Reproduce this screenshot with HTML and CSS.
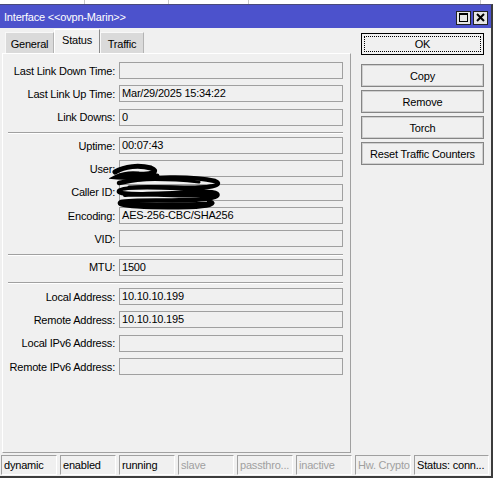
FILE: index.html
```html
<!DOCTYPE html>
<html lang="en">
<head>
    <meta charset="UTF-8">
    <meta name="viewport" content="width=device-width, initial-scale=1.0">
    <title>Interface &lt;&lt;ovpn-Marin&gt;&gt;</title>
    <link rel="stylesheet" href="styles.css">
</head>
<body>
    <div class="desk">
        <div class="backdrop"></div>
        <div class="window">
            <div class="titlebar">
                <span class="title">Interface &lt;&lt;ovpn-Marin&gt;&gt;</span>
                <div class="wbtns">
                    <span class="wbtn">
                        <svg width="13" height="12" viewBox="0 0 13 12">
                            <rect x="2.5" y="1.5" width="8" height="8" fill="none" stroke="#000" stroke-width="1"/>
                            <rect x="2" y="1" width="9" height="2" fill="#000"/>
                        </svg>
                    </span>
                    <span class="wbtn">
                        <svg width="13" height="12" viewBox="0 0 13 12">
                            <path d="M3 2 L10 9 M10 2 L3 9" stroke="#000" stroke-width="2"/>
                        </svg>
                    </span>
                </div>
            </div>
            <div class="main">
                <div class="left">
                    <div class="tabs">
                        <div class="tab tab-general">General</div>
                        <div class="tab tab-status active">Status</div>
                        <div class="tab tab-traffic">Traffic</div>
                    </div>
                    <div class="panel">
                        <div class="row"><span class="label">Last Link Down Time:</span><span class="field"></span></div>
                        <div class="row"><span class="label">Last Link Up Time:</span><span class="field">Mar/29/2025 15:34:22</span></div>
                        <div class="row"><span class="label">Link Downs:</span><span class="field">0</span></div>
                        <div class="sep"></div>
                        <div class="row"><span class="label">Uptime:</span><span class="field">00:07:43</span></div>
                        <div class="row"><span class="label">User:</span><span class="field"></span></div>
                        <div class="row"><span class="label">Caller ID:</span><span class="field"></span></div>
                        <div class="row"><span class="label">Encoding:</span><span class="field">AES-256-CBC/SHA256</span></div>
                        <div class="row"><span class="label">VID:</span><span class="field"></span></div>
                        <div class="sep"></div>
                        <div class="row"><span class="label">MTU:</span><span class="field">1500</span></div>
                        <div class="sep sep-wide"></div>
                        <div class="row"><span class="label">Local Address:</span><span class="field">10.10.10.199</span></div>
                        <div class="row"><span class="label">Remote Address:</span><span class="field">10.10.10.195</span></div>
                        <div class="row"><span class="label">Local IPv6 Address:</span><span class="field"></span></div>
                        <div class="row"><span class="label">Remote IPv6 Address:</span><span class="field"></span></div>

                        <!-- redaction scribble over user / caller id -->
                        <svg class="scribble" width="120" height="52" viewBox="0 0 120 52">
                            <path d="M6 10 C16 4 30 3 42 6 C50 9 44 13 30 12 C20 11 12 13 8 15 C20 16 36 15 48 14" fill="none" stroke="#000" stroke-width="5" stroke-linecap="round"/>
                            <path d="M10 21 C40 14 84 14 106 19 C116 23 100 27 70 26 C40 25 12 25 10 29 C8 34 50 32 94 30 C112 29 114 35 96 37 C66 40 24 37 12 40 C4 44 40 46 80 45 C100 44 108 42 100 39" fill="none" stroke="#000" stroke-width="4.5" stroke-linecap="round"/>
                            <path d="M16 33 C40 31 70 35 104 33" fill="none" stroke="#000" stroke-width="4" stroke-linecap="round"/>
                            <path d="M20 25 C50 23 80 27 102 24" fill="none" stroke="#000" stroke-width="3" stroke-linecap="round"/>
                            <path d="M14 42 C40 43 70 42 104 41" fill="none" stroke="#000" stroke-width="3" stroke-linecap="round"/>
                            <path d="M30 18 C50 17 70 18 90 20" fill="none" stroke="#000" stroke-width="3" stroke-linecap="round"/>
                        </svg>
                    </div>
                </div>
                <div class="actions">
                    <div class="btn btn-default">OK</div>
                    <div class="btn">Copy</div>
                    <div class="btn">Remove</div>
                    <div class="btn">Torch</div>
                    <div class="btn">Reset Traffic Counters</div>
                </div>
            </div>
            <div class="statusbar">
                <div class="cell">dynamic</div>
                <div class="cell">enabled</div>
                <div class="cell">running</div>
                <div class="cell off">slave</div>
                <div class="cell off">passthro...</div>
                <div class="cell off">inactive</div>
                <div class="cell off">Hw. Crypto</div>
                <div class="cell cell-wide">Status: conn...</div>
            </div>
        </div>
    </div>
</body>
</html>
```

FILE: styles.css
```css
body {
    margin: 0;
    padding: 0;
    background-color: #fff;
    font-family: "Liberation Sans", Arial, sans-serif;
    font-size: 11px;
    letter-spacing: -0.2px;
    color: #000;
}
.desk {
    width: 495px;
    height: 479px;
    overflow: hidden;
    background-color: #fff;
}
.backdrop {
    height: 4px;
    background-image:
        linear-gradient(#c8c8c8, #c8c8c8),
        linear-gradient(#c8c8c8, #c8c8c8),
        linear-gradient(#c8c8c8, #c8c8c8),
        linear-gradient(#c8c8c8, #c8c8c8);
    background-size: 1px 4px;
    background-repeat: no-repeat;
    background-position: 84px 0, 168px 0, 248px 0, 480px 0;
}
.window {
    width: 491px;
    background-color: #f0f0f0;
    border-top: 1px solid #4a4a7a;
    border-right: 2px solid #3c3c3c;
    border-bottom: 2px solid #3c3c3c;
    padding-bottom: 1px;
}
.titlebar {
    height: 23px;
    background-color: #4c52cc;
    display: flex;
    justify-content: space-between;
    align-items: flex-start;
    padding: 0 3px 0 4px;
}
.title {
    color: #fff;
    font-size: 11px;
    line-height: 23px;
    padding-top: 1px;
}
.wbtns {
    display: flex;
    gap: 2px;
    margin-top: 6px;
}
.wbtn {
    width: 15px;
    height: 14px;
    box-sizing: border-box;
    border: 1px solid #222;
    background-color: #e6e6e6;
    display: flex;
    align-items: center;
    justify-content: center;
}
.main {
    display: flex;
    padding-top: 1px;
}
.left {
    padding-left: 2px;
}
.tabs {
    display: flex;
    align-items: flex-end;
    height: 24px;
    padding-left: 3px;
}
.tab {
    height: 21px;
    box-sizing: border-box;
    border: 1px solid;
    border-color: #f8f8f8 #b4b4b4 transparent #f8f8f8;
    border-bottom: none;
    background-color: #dadada;
    display: flex;
    align-items: center;
    justify-content: center;
    padding-top: 1px;
}
.tab-general {
    width: 49px;
}
.tab-status {
    width: 46px;
}
.tab-traffic {
    width: 44px;
}
.tab.active {
    height: 24px;
    background-color: #f0f0f0;
    border-color: #fff #8c8c8c transparent #fff;
    padding-top: 0;
    padding-bottom: 3px;
}
.panel {
    position: relative;
    width: 349px;
    height: 400px;
    box-sizing: border-box;
    border: 1px solid;
    border-color: #fff #a0a0a0 #a0a0a0 #fff;
    padding-top: 8px;
}
.row {
    display: flex;
    align-items: center;
    margin-bottom: 6.35px;
}
.label {
    width: 112px;
    margin-right: 4px;
    text-align: right;
    white-space: nowrap;
}
.field {
    width: 224px;
    height: 17px;
    box-sizing: border-box;
    border: 1px solid #a0a0a0;
    background-color: #f0f0f0;
    padding-left: 2px;
    line-height: 15px;
    white-space: nowrap;
}
.sep {
    width: 335px;
    height: 0;
    margin: 1px 0 3px 5px;
    border-top: 1px solid #a0a0a0;
    border-bottom: 1px solid #fff;
}
.sep-wide {
    margin: 3px 0 4px 5px;
}
.scribble {
    position: absolute;
    left: 106px;
    top: 108px;
}
.actions {
    margin-left: 10px;
    padding-top: 4px;
    width: 123px;
}
.btn {
    height: 23px;
    box-sizing: border-box;
    border: 1px solid #858585;
    box-shadow: inset 0 0 0 1px #cfcfcf;
    background-color: #f0f0f0;
    display: flex;
    align-items: center;
    justify-content: center;
    margin-bottom: 3px;
}
.btn-default {
    height: 22px;
    border-color: #000;
    box-shadow: none;
    outline: 1px dotted #000;
    outline-offset: -4px;
    margin-bottom: 9px;
}
.statusbar {
    display: flex;
    gap: 3px;
    margin-top: 2px;
    padding-left: 1px;
}
.cell {
    width: 56px;
    height: 20px;
    box-sizing: border-box;
    border: 1px solid;
    border-color: #a0a0a0 #fff #fff #a0a0a0;
    padding-left: 2px;
    line-height: 18px;
    white-space: nowrap;
    overflow: hidden;
}
.cell.off {
    color: #a0a0a0;
}
.cell-wide {
    width: 75px;
}
```
